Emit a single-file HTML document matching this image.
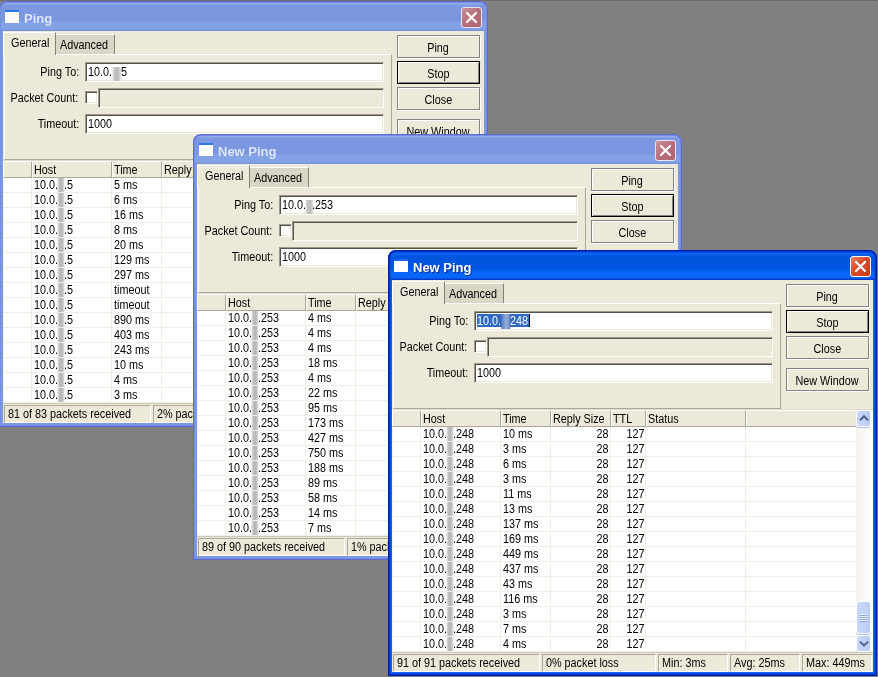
<!DOCTYPE html>
<html><head><meta charset="utf-8"><title>Ping</title>
<style>
html,body{margin:0;padding:0;}
body::before{content:'';position:absolute;left:0;top:0;width:878px;height:1px;background:#6c6c6c;}
body{width:878px;height:677px;overflow:hidden;background:#808080;position:relative;font-family:"Liberation Sans",sans-serif;font-size:12px;color:#000;}
.t{display:inline-block;transform:scaleX(.9);transform-origin:0 50%;white-space:nowrap;}
.t.r{transform-origin:100% 50%;}
.t.c{transform-origin:50% 50%;}
#root{position:absolute;left:0;top:0;width:878px;height:677px;will-change:transform;}
.win{position:absolute;width:489px;height:426px;border-radius:8px 8px 0 0;overflow:hidden;}
.win.inactive{background:#7b98e2;}
.win::after{content:'';position:absolute;left:0;top:0;right:0;bottom:0;border-radius:8px 8px 0 0;pointer-events:none;}
.win.inactive::after{box-shadow:inset 0 0 0 1px #5f68d2,inset 0 0 0 2px #7490e0;}
.win.active{background:#1460f0;}
.win.active::after{box-shadow:inset 0 0 0 1px #001ea0,inset 0 0 0 2px #0036d4,inset 0 0 0 3px #0a4ee6;}
.tbar{position:absolute;left:0;top:0;width:489px;height:30px;}
.inactive .tbar{background:linear-gradient(#7b93dc 0,#7b93dc 1px,#9db4ec 1px,#90a9e8 3px,#7d98e1 4px,#7b96e0 19px,#84a2e6 22px,#84a3e6 28px,#7a95df 29px,#7590dc 30px);border-radius:8px 8px 0 0;}
.active .tbar{background:linear-gradient(#0a50dc 0,#0a50dc 1px,#3c96ff 1px,#3a94ff 3px,#0a64ee 3.5px,#0a60ea 5px,#0055e0 6px,#0055e0 18px,#0663f2 22px,#0866f6 23px,#0866f6 28px,#0540d0 29px,#0232c8 30px);border-radius:8px 8px 0 0;}
.ticon{position:absolute;left:6px;top:9px;width:14px;height:13px;background:#fff;border-top:2px solid #1a66e8;box-sizing:border-box;}
.inactive .ticon{border-top:2px solid #2a78e0;background:#fdfdfd;}
.ttext{position:absolute;left:25px;top:9.5px;font-weight:bold;font-size:13px;line-height:16px;color:#fff;white-space:nowrap;}
.inactive .ttext{color:#dde6f9;}
.active .ttext{text-shadow:1px 1px 0 #0a2e9a;}
.xbtn{position:absolute;left:462px;top:6px;width:21px;height:21px;border-radius:3px;box-sizing:border-box;border:1px solid #fff;overflow:hidden;}
.xbtn svg{position:absolute;left:-1px;top:-1px;}
.active .xbtn{background:linear-gradient(135deg,#e8836a 0,#d9502f 40%,#c83a18 100%);}
.inactive .xbtn{background:linear-gradient(135deg,#c98f98 0,#b86f7b 50%,#b0636f 100%);border-color:#e6e6f0;}
.body{position:absolute;left:4px;top:30px;width:481px;height:392px;background:#ece9d8;}
.panel{position:absolute;left:1px;top:23px;width:388px;height:106px;border:1px solid #fff;border-right-color:#aca899;border-bottom-color:#aca899;box-sizing:border-box;}
.tab1{position:absolute;left:0;top:1px;width:53px;height:23px;box-sizing:border-box;border-left:1px solid #fff;border-top:1px solid #fff;border-right:1px solid #868275;background:#ece9d8;padding:4px 0 0 7px;line-height:13px;}
.tab2{position:absolute;left:53px;top:3px;width:59px;height:20px;box-sizing:border-box;border-top:1px solid #fff;border-right:1px solid #868275;background:#d9d6c5;padding:4px 0 0 4px;line-height:13px;}
.lbl{position:absolute;left:0;width:75.8px;text-align:right;line-height:19px;white-space:nowrap;}
.inp{position:absolute;left:82px;width:299px;height:20px;box-sizing:border-box;background:#fff;border:1px solid #9d9a8a;border-right-color:#fff;border-bottom-color:#fff;box-shadow:inset 1px 1px 0 #55534b,inset -1px -1px 0 #ebe8d7;padding:3px 0 0 2px;line-height:13px;white-space:nowrap;}
.inp.dis{left:95px;width:286px;background:#ece9d8;}
.chk{position:absolute;left:82px;top:60px;width:13px;height:13px;box-sizing:border-box;background:#fff;border:1px solid #9d9a8a;border-right-color:#fff;border-bottom-color:#fff;box-shadow:inset 1px 1px 0 #55534b,inset -1px -1px 0 #ebe8d7;}
.btn{position:absolute;left:394px;width:83px;height:23px;box-sizing:border-box;border:1px solid #848484;box-shadow:inset 1px 1px 0 #fff,1px 1px 0 #fff;text-align:center;line-height:24px;white-space:nowrap;}
.btn.def{border-color:#000;box-shadow:inset 1px 1px 0 #fff,inset -1px -1px 0 #848484;}
.thead{position:absolute;left:0;top:130px;width:481px;height:17px;background:#ece9d8;}
.th{position:absolute;top:0;height:17px;box-sizing:border-box;border-top:1px solid #fff;border-left:1px solid #fff;border-right:1px solid #aca899;border-bottom:1px solid #aca899;padding:1px 0 0 0.6px;line-height:14px;white-space:nowrap;overflow:hidden;}
.th.last{border-right-color:#ece9d8;}
.tbody{position:absolute;left:0;top:147px;width:464px;height:225px;background:#fff;overflow:hidden;}
.row{position:absolute;left:0;width:464px;height:15px;box-sizing:border-box;border-bottom:1px solid #f0efe4;line-height:14px;white-space:nowrap;}
.row span{position:absolute;top:0;}
.c-host{left:31px;}
.c-time{left:111px;}
.c-size{left:159px;width:57.5px;text-align:right;}
.c-ttl{left:219px;width:33.5px;text-align:right;}
.vl{position:absolute;top:0;width:1px;height:225px;background:#f0efe4;}
.sbar{position:absolute;left:464px;top:130px;width:17px;height:242px;background:linear-gradient(90deg,#f4f2ea,#fbfaf6 50%,#fefefc);}
.sb-up,.sb-dn,.sb-thumb{position:absolute;left:0;width:15px;box-sizing:border-box;border:1px solid #fff;border-radius:3px;background:linear-gradient(90deg,#c8d7fb,#c1d2f9 60%,#b9caf4);box-shadow:0 1px 0 #aebfee;}
.sb-up{top:0;height:17px;}
.sb-dn{top:225px;height:17px;}
.sb-thumb{top:191px;height:33px;}
.sb-up svg,.sb-dn svg{position:absolute;left:-1.5px;top:-1px;}
.sb-thumb i{position:absolute;left:3px;top:12px;width:7px;height:8px;background:repeating-linear-gradient(#f2f6ff 0,#f2f6ff 1px,#8da2dc 1px,#8da2dc 2px);}
.status{position:absolute;left:0;top:374px;width:481px;height:18px;}
.sp{position:absolute;top:0;height:18px;box-sizing:border-box;border:1px solid #aca899;border-right-color:#fff;border-bottom-color:#fff;padding:1px 0 0 3px;line-height:14px;white-space:nowrap;overflow:hidden;}

.gap{display:inline-block;width:6.7px;height:1px;}
.strip{position:absolute;left:54px;top:0;width:8px;height:225px;background:linear-gradient(90deg,rgba(190,190,190,0) 0,#c4c4c4 25%,#b4b4b4 50%,#c4c4c4 75%,rgba(190,190,190,0) 100%);}
.b2,.b3{display:inline-block;width:10px;height:14px;vertical-align:top;margin-top:0.5px;background:linear-gradient(90deg,#e9e9e9 0,#c6c6c6 25%,#b9b9b9 55%,#cfcfcf 80%,#ececec 100%);}
.b3{width:8.9px;margin-left:-1.1px;margin-right:-1.1px;}
.t.sel{background:#316ac5;color:#fff;height:12px;line-height:13px;padding:1px 1px 0 0;margin-top:-1px;}
.sel .b2{height:15px;margin-top:-1px;background:linear-gradient(90deg,#4c7bcb 0,#7f9bd0 30%,#93a9d4 55%,#7f9bd0 80%,#4c7bcb 100%);}
.caret{position:absolute;left:54px;top:2px;width:1px;height:13px;background:#000;}
.tline{position:absolute;left:0;top:372px;width:481px;height:1px;background:#cbc8b8;}
.hsep{position:absolute;left:0;top:129px;width:481px;height:1px;background:#dedbcb;}

</style></head><body><div id="root">

<div class="win w1 inactive" style="left:-1px;top:1px">
  <div class="tbar"><div class="ticon"></div><div class="ttext">Ping</div><div class="xbtn"><svg width="21" height="21" viewBox="0 0 21 21"><path d="M6 6 L15 15 M15 6 L6 15" stroke="#fff" stroke-width="2.2" stroke-linecap="round"/></svg></div></div>
  <div class="body">
    <div class="hsep"></div>
    <div class="panel"></div>
    <div class="tab1"><span class="t">General</span></div>
    <div class="tab2"><span class="t">Advanced</span></div>
    <div class="lbl" style="top:32px"><span class="t r">Ping To:</span></div>
    <div class="inp" style="top:31px"><span class="t">10.0.<i class="b2"></i>5</span></div>
    <div class="lbl" style="top:58px"><span class="t r">Packet Count:</span></div>
    <div class="chk"></div>
    <div class="inp dis" style="top:57px"></div>
    <div class="lbl" style="top:84px"><span class="t r">Timeout:</span></div>
    <div class="inp" style="top:83px"><span class="t">1000</span></div>
    <div class="btn" style="top:4px"><span class="t c">Ping</span></div>
    <div class="btn def" style="top:30px"><span class="t c">Stop</span></div>
    <div class="btn" style="top:56px"><span class="t c">Close</span></div>
    <div class="btn" style="top:88px"><span class="t c">New Window</span></div>
    <div class="thead">
      <div class="th" style="left:0;width:29px"></div>
      <div class="th" style="left:29px;width:80px"><span class="t">Host</span></div>
      <div class="th" style="left:109px;width:50px"><span class="t">Time</span></div>
      <div class="th" style="left:159px;width:60px"><span class="t">Reply Size</span></div>
      <div class="th" style="left:219px;width:35px"><span class="t">TTL</span></div>
      <div class="th" style="left:254px;width:100px"><span class="t">Status</span></div>
      <div class="th last" style="left:354px;width:110px"></div>
    </div>
    <div class="tbody">
      <div class="vl" style="left:0;background:#f4f3ea"></div><div class="vl" style="left:28px"></div><div class="vl" style="left:108px"></div><div class="vl" style="left:158px"></div><div class="vl" style="left:218px"></div><div class="vl" style="left:253px"></div><div class="vl" style="left:353px"></div><div class="strip"></div>
      <div class="row" style="top:0px"><span class="c-host t">10.0.<i class="gap"></i>.5</span><span class="c-time t">5 ms</span><span class="c-size t r">28</span><span class="c-ttl t r">127</span></div><div class="row" style="top:15px"><span class="c-host t">10.0.<i class="gap"></i>.5</span><span class="c-time t">6 ms</span><span class="c-size t r">28</span><span class="c-ttl t r">127</span></div><div class="row" style="top:30px"><span class="c-host t">10.0.<i class="gap"></i>.5</span><span class="c-time t">16 ms</span><span class="c-size t r">28</span><span class="c-ttl t r">127</span></div><div class="row" style="top:45px"><span class="c-host t">10.0.<i class="gap"></i>.5</span><span class="c-time t">8 ms</span><span class="c-size t r">28</span><span class="c-ttl t r">127</span></div><div class="row" style="top:60px"><span class="c-host t">10.0.<i class="gap"></i>.5</span><span class="c-time t">20 ms</span><span class="c-size t r">28</span><span class="c-ttl t r">127</span></div><div class="row" style="top:75px"><span class="c-host t">10.0.<i class="gap"></i>.5</span><span class="c-time t">129 ms</span><span class="c-size t r">28</span><span class="c-ttl t r">127</span></div><div class="row" style="top:90px"><span class="c-host t">10.0.<i class="gap"></i>.5</span><span class="c-time t">297 ms</span><span class="c-size t r">28</span><span class="c-ttl t r">127</span></div><div class="row" style="top:105px"><span class="c-host t">10.0.<i class="gap"></i>.5</span><span class="c-time t">timeout</span></div><div class="row" style="top:120px"><span class="c-host t">10.0.<i class="gap"></i>.5</span><span class="c-time t">timeout</span></div><div class="row" style="top:135px"><span class="c-host t">10.0.<i class="gap"></i>.5</span><span class="c-time t">890 ms</span><span class="c-size t r">28</span><span class="c-ttl t r">127</span></div><div class="row" style="top:150px"><span class="c-host t">10.0.<i class="gap"></i>.5</span><span class="c-time t">403 ms</span><span class="c-size t r">28</span><span class="c-ttl t r">127</span></div><div class="row" style="top:165px"><span class="c-host t">10.0.<i class="gap"></i>.5</span><span class="c-time t">243 ms</span><span class="c-size t r">28</span><span class="c-ttl t r">127</span></div><div class="row" style="top:180px"><span class="c-host t">10.0.<i class="gap"></i>.5</span><span class="c-time t">10 ms</span><span class="c-size t r">28</span><span class="c-ttl t r">127</span></div><div class="row" style="top:195px"><span class="c-host t">10.0.<i class="gap"></i>.5</span><span class="c-time t">4 ms</span><span class="c-size t r">28</span><span class="c-ttl t r">127</span></div><div class="row" style="top:210px"><span class="c-host t">10.0.<i class="gap"></i>.5</span><span class="c-time t">3 ms</span><span class="c-size t r">28</span><span class="c-ttl t r">127</span></div>
    </div>
    <div class="sbar">
      <div class="sb-up"><svg width="17" height="17" viewBox="0 0 17 17"><path d="M4 10.2 L8 6.2 L12 10.2" stroke="#4d6185" stroke-width="2" fill="none"/></svg></div>
      <div class="sb-thumb"><i></i></div>
      <div class="sb-dn"><svg width="17" height="17" viewBox="0 0 17 17"><path d="M4 6.6 L8 10.6 L12 6.6" stroke="#4d6185" stroke-width="2" fill="none"/></svg></div>
    </div>
    <div class="tline"></div>
    <div class="status"><div class="sp" style="left:1px;width:147px"><span class="t">81 of 83 packets received</span></div><div class="sp" style="left:150px;width:114px"><span class="t">2% packet loss</span></div><div class="sp" style="left:266px;width:70px"><span class="t">Min: 3ms</span></div><div class="sp" style="left:338px;width:70px"><span class="t">Avg: 100ms</span></div><div class="sp" style="left:410px;width:70px"><span class="t">Max: 890ms</span></div></div>
  </div>
</div>

<div class="win w2 inactive" style="left:193px;top:134px">
  <div class="tbar"><div class="ticon"></div><div class="ttext">New Ping</div><div class="xbtn"><svg width="21" height="21" viewBox="0 0 21 21"><path d="M6 6 L15 15 M15 6 L6 15" stroke="#fff" stroke-width="2.2" stroke-linecap="round"/></svg></div></div>
  <div class="body">
    <div class="hsep"></div>
    <div class="panel"></div>
    <div class="tab1"><span class="t">General</span></div>
    <div class="tab2"><span class="t">Advanced</span></div>
    <div class="lbl" style="top:32px"><span class="t r">Ping To:</span></div>
    <div class="inp" style="top:31px"><span class="t">10.0.<i class="b3"></i>.253</span></div>
    <div class="lbl" style="top:58px"><span class="t r">Packet Count:</span></div>
    <div class="chk"></div>
    <div class="inp dis" style="top:57px"></div>
    <div class="lbl" style="top:84px"><span class="t r">Timeout:</span></div>
    <div class="inp" style="top:83px"><span class="t">1000</span></div>
    <div class="btn" style="top:4px"><span class="t c">Ping</span></div>
    <div class="btn def" style="top:30px"><span class="t c">Stop</span></div>
    <div class="btn" style="top:56px"><span class="t c">Close</span></div>
    <div class="btn" style="top:88px"><span class="t c">New Window</span></div>
    <div class="thead">
      <div class="th" style="left:0;width:29px"></div>
      <div class="th" style="left:29px;width:80px"><span class="t">Host</span></div>
      <div class="th" style="left:109px;width:50px"><span class="t">Time</span></div>
      <div class="th" style="left:159px;width:60px"><span class="t">Reply Size</span></div>
      <div class="th" style="left:219px;width:35px"><span class="t">TTL</span></div>
      <div class="th" style="left:254px;width:100px"><span class="t">Status</span></div>
      <div class="th last" style="left:354px;width:110px"></div>
    </div>
    <div class="tbody">
      <div class="vl" style="left:0;background:#f4f3ea"></div><div class="vl" style="left:28px"></div><div class="vl" style="left:108px"></div><div class="vl" style="left:158px"></div><div class="vl" style="left:218px"></div><div class="vl" style="left:253px"></div><div class="vl" style="left:353px"></div><div class="strip"></div>
      <div class="row" style="top:0px"><span class="c-host t">10.0.<i class="gap"></i>.253</span><span class="c-time t">4 ms</span><span class="c-size t r">28</span><span class="c-ttl t r">127</span></div><div class="row" style="top:15px"><span class="c-host t">10.0.<i class="gap"></i>.253</span><span class="c-time t">4 ms</span><span class="c-size t r">28</span><span class="c-ttl t r">127</span></div><div class="row" style="top:30px"><span class="c-host t">10.0.<i class="gap"></i>.253</span><span class="c-time t">4 ms</span><span class="c-size t r">28</span><span class="c-ttl t r">127</span></div><div class="row" style="top:45px"><span class="c-host t">10.0.<i class="gap"></i>.253</span><span class="c-time t">18 ms</span><span class="c-size t r">28</span><span class="c-ttl t r">127</span></div><div class="row" style="top:60px"><span class="c-host t">10.0.<i class="gap"></i>.253</span><span class="c-time t">4 ms</span><span class="c-size t r">28</span><span class="c-ttl t r">127</span></div><div class="row" style="top:75px"><span class="c-host t">10.0.<i class="gap"></i>.253</span><span class="c-time t">22 ms</span><span class="c-size t r">28</span><span class="c-ttl t r">127</span></div><div class="row" style="top:90px"><span class="c-host t">10.0.<i class="gap"></i>.253</span><span class="c-time t">95 ms</span><span class="c-size t r">28</span><span class="c-ttl t r">127</span></div><div class="row" style="top:105px"><span class="c-host t">10.0.<i class="gap"></i>.253</span><span class="c-time t">173 ms</span><span class="c-size t r">28</span><span class="c-ttl t r">127</span></div><div class="row" style="top:120px"><span class="c-host t">10.0.<i class="gap"></i>.253</span><span class="c-time t">427 ms</span><span class="c-size t r">28</span><span class="c-ttl t r">127</span></div><div class="row" style="top:135px"><span class="c-host t">10.0.<i class="gap"></i>.253</span><span class="c-time t">750 ms</span><span class="c-size t r">28</span><span class="c-ttl t r">127</span></div><div class="row" style="top:150px"><span class="c-host t">10.0.<i class="gap"></i>.253</span><span class="c-time t">188 ms</span><span class="c-size t r">28</span><span class="c-ttl t r">127</span></div><div class="row" style="top:165px"><span class="c-host t">10.0.<i class="gap"></i>.253</span><span class="c-time t">89 ms</span><span class="c-size t r">28</span><span class="c-ttl t r">127</span></div><div class="row" style="top:180px"><span class="c-host t">10.0.<i class="gap"></i>.253</span><span class="c-time t">58 ms</span><span class="c-size t r">28</span><span class="c-ttl t r">127</span></div><div class="row" style="top:195px"><span class="c-host t">10.0.<i class="gap"></i>.253</span><span class="c-time t">14 ms</span><span class="c-size t r">28</span><span class="c-ttl t r">127</span></div><div class="row" style="top:210px"><span class="c-host t">10.0.<i class="gap"></i>.253</span><span class="c-time t">7 ms</span><span class="c-size t r">28</span><span class="c-ttl t r">127</span></div>
    </div>
    <div class="sbar">
      <div class="sb-up"><svg width="17" height="17" viewBox="0 0 17 17"><path d="M4 10.2 L8 6.2 L12 10.2" stroke="#4d6185" stroke-width="2" fill="none"/></svg></div>
      <div class="sb-thumb"><i></i></div>
      <div class="sb-dn"><svg width="17" height="17" viewBox="0 0 17 17"><path d="M4 6.6 L8 10.6 L12 6.6" stroke="#4d6185" stroke-width="2" fill="none"/></svg></div>
    </div>
    <div class="tline"></div>
    <div class="status"><div class="sp" style="left:1px;width:147px"><span class="t">89 of 90 packets received</span></div><div class="sp" style="left:150px;width:114px"><span class="t">1% packet loss</span></div><div class="sp" style="left:266px;width:70px"><span class="t">Min: 4ms</span></div><div class="sp" style="left:338px;width:70px"><span class="t">Avg: 60ms</span></div><div class="sp" style="left:410px;width:70px"><span class="t">Max: 750ms</span></div></div>
  </div>
</div>

<div class="win w3 active" style="left:388px;top:250px">
  <div class="tbar"><div class="ticon"></div><div class="ttext">New Ping</div><div class="xbtn"><svg width="21" height="21" viewBox="0 0 21 21"><path d="M6 6 L15 15 M15 6 L6 15" stroke="#fff" stroke-width="2.2" stroke-linecap="round"/></svg></div></div>
  <div class="body">
    <div class="hsep"></div>
    <div class="panel"></div>
    <div class="tab1"><span class="t">General</span></div>
    <div class="tab2"><span class="t">Advanced</span></div>
    <div class="lbl" style="top:32px"><span class="t r">Ping To:</span></div>
    <div class="inp" style="top:31px"><span class="t sel">10.0.<i class="b2"></i>248</span><i class="caret"></i></div>
    <div class="lbl" style="top:58px"><span class="t r">Packet Count:</span></div>
    <div class="chk"></div>
    <div class="inp dis" style="top:57px"></div>
    <div class="lbl" style="top:84px"><span class="t r">Timeout:</span></div>
    <div class="inp" style="top:83px"><span class="t">1000</span></div>
    <div class="btn" style="top:4px"><span class="t c">Ping</span></div>
    <div class="btn def" style="top:30px"><span class="t c">Stop</span></div>
    <div class="btn" style="top:56px"><span class="t c">Close</span></div>
    <div class="btn" style="top:88px"><span class="t c">New Window</span></div>
    <div class="thead">
      <div class="th" style="left:0;width:29px"></div>
      <div class="th" style="left:29px;width:80px"><span class="t">Host</span></div>
      <div class="th" style="left:109px;width:50px"><span class="t">Time</span></div>
      <div class="th" style="left:159px;width:60px"><span class="t">Reply Size</span></div>
      <div class="th" style="left:219px;width:35px"><span class="t">TTL</span></div>
      <div class="th" style="left:254px;width:100px"><span class="t">Status</span></div>
      <div class="th last" style="left:354px;width:110px"></div>
    </div>
    <div class="tbody">
      <div class="vl" style="left:0;background:#f4f3ea"></div><div class="vl" style="left:28px"></div><div class="vl" style="left:108px"></div><div class="vl" style="left:158px"></div><div class="vl" style="left:218px"></div><div class="vl" style="left:253px"></div><div class="vl" style="left:353px"></div><div class="strip"></div>
      <div class="row" style="top:0px"><span class="c-host t">10.0.<i class="gap"></i>.248</span><span class="c-time t">10 ms</span><span class="c-size t r">28</span><span class="c-ttl t r">127</span></div><div class="row" style="top:15px"><span class="c-host t">10.0.<i class="gap"></i>.248</span><span class="c-time t">3 ms</span><span class="c-size t r">28</span><span class="c-ttl t r">127</span></div><div class="row" style="top:30px"><span class="c-host t">10.0.<i class="gap"></i>.248</span><span class="c-time t">6 ms</span><span class="c-size t r">28</span><span class="c-ttl t r">127</span></div><div class="row" style="top:45px"><span class="c-host t">10.0.<i class="gap"></i>.248</span><span class="c-time t">3 ms</span><span class="c-size t r">28</span><span class="c-ttl t r">127</span></div><div class="row" style="top:60px"><span class="c-host t">10.0.<i class="gap"></i>.248</span><span class="c-time t">11 ms</span><span class="c-size t r">28</span><span class="c-ttl t r">127</span></div><div class="row" style="top:75px"><span class="c-host t">10.0.<i class="gap"></i>.248</span><span class="c-time t">13 ms</span><span class="c-size t r">28</span><span class="c-ttl t r">127</span></div><div class="row" style="top:90px"><span class="c-host t">10.0.<i class="gap"></i>.248</span><span class="c-time t">137 ms</span><span class="c-size t r">28</span><span class="c-ttl t r">127</span></div><div class="row" style="top:105px"><span class="c-host t">10.0.<i class="gap"></i>.248</span><span class="c-time t">169 ms</span><span class="c-size t r">28</span><span class="c-ttl t r">127</span></div><div class="row" style="top:120px"><span class="c-host t">10.0.<i class="gap"></i>.248</span><span class="c-time t">449 ms</span><span class="c-size t r">28</span><span class="c-ttl t r">127</span></div><div class="row" style="top:135px"><span class="c-host t">10.0.<i class="gap"></i>.248</span><span class="c-time t">437 ms</span><span class="c-size t r">28</span><span class="c-ttl t r">127</span></div><div class="row" style="top:150px"><span class="c-host t">10.0.<i class="gap"></i>.248</span><span class="c-time t">43 ms</span><span class="c-size t r">28</span><span class="c-ttl t r">127</span></div><div class="row" style="top:165px"><span class="c-host t">10.0.<i class="gap"></i>.248</span><span class="c-time t">116 ms</span><span class="c-size t r">28</span><span class="c-ttl t r">127</span></div><div class="row" style="top:180px"><span class="c-host t">10.0.<i class="gap"></i>.248</span><span class="c-time t">3 ms</span><span class="c-size t r">28</span><span class="c-ttl t r">127</span></div><div class="row" style="top:195px"><span class="c-host t">10.0.<i class="gap"></i>.248</span><span class="c-time t">7 ms</span><span class="c-size t r">28</span><span class="c-ttl t r">127</span></div><div class="row" style="top:210px"><span class="c-host t">10.0.<i class="gap"></i>.248</span><span class="c-time t">4 ms</span><span class="c-size t r">28</span><span class="c-ttl t r">127</span></div>
    </div>
    <div class="sbar">
      <div class="sb-up"><svg width="17" height="17" viewBox="0 0 17 17"><path d="M4 10.2 L8 6.2 L12 10.2" stroke="#4d6185" stroke-width="2" fill="none"/></svg></div>
      <div class="sb-thumb"><i></i></div>
      <div class="sb-dn"><svg width="17" height="17" viewBox="0 0 17 17"><path d="M4 6.6 L8 10.6 L12 6.6" stroke="#4d6185" stroke-width="2" fill="none"/></svg></div>
    </div>
    <div class="tline"></div>
    <div class="status"><div class="sp" style="left:1px;width:147px"><span class="t">91 of 91 packets received</span></div><div class="sp" style="left:150px;width:114px"><span class="t">0% packet loss</span></div><div class="sp" style="left:266px;width:70px"><span class="t">Min: 3ms</span></div><div class="sp" style="left:338px;width:70px"><span class="t">Avg: 25ms</span></div><div class="sp" style="left:410px;width:70px"><span class="t">Max: 449ms</span></div></div>
  </div>
</div>
</div></body></html>
